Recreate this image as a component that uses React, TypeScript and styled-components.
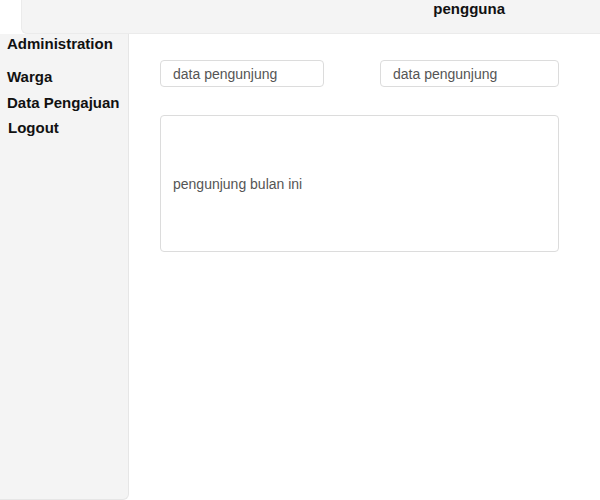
import React from "react";
import styled, { createGlobalStyle } from "styled-components";

const Global = createGlobalStyle`
  html, body { margin: 0; padding: 0; background: #ffffff; }
  body { font-family: "Liberation Sans", Arial, sans-serif; color: #111; }
  * { box-sizing: border-box; }
`;

const Page = styled.div`
  display: flex;
  flex-direction: column;
  width: 600px;
  height: 500px;
  overflow: hidden;
`;

const Header = styled.header`
  margin-left: 21px;
  height: 34px;
  background: #f4f4f4;
  border-left: 1px solid #ebebeb;
  border-bottom: 1px solid #ebebeb;
  border-bottom-left-radius: 6px;
  display: flex;
  justify-content: flex-end;
  align-items: flex-start;
  padding-right: 95px;
`;

const HeaderTitle = styled.span`
  font-size: 15px;
  font-weight: bold;
  line-height: 17px;
  color: #111;
`;

const Body = styled.div`
  flex: 1;
  display: flex;
  min-height: 0;
`;

const Sidebar = styled.nav`
  width: 129px;
  flex-shrink: 0;
  background: #f4f4f4;
  border-right: 1px solid #e6e6e6;
  border-bottom: 1px solid #e6e6e6;
  border-bottom-right-radius: 6px;
  padding: 1px 0 0 7px;
`;

const SideHeading = styled.div`
  font-size: 15px;
  font-weight: bold;
  line-height: 17px;
  margin-bottom: 12px;
`;

const SideList = styled.ul`
  list-style: none;
  margin: 0;
  padding: 0;
`;

const SideItem = styled.li<{ $indent?: number }>`
  font-size: 15px;
  font-weight: bold;
  line-height: 25.5px;
  padding-left: ${(p) => p.$indent ?? 0}px;
`;

const Main = styled.main`
  flex: 1;
  padding: 26px 0 0 31px;
  display: flex;
  flex-direction: column;
  gap: 28px;
`;

const StatRow = styled.div`
  display: flex;
  justify-content: space-between;
  width: 399px;
`;

const StatBox = styled.div<{ $width: number }>`
  width: ${(p) => p.$width}px;
  height: 27px;
  border: 1px solid #dcdcdc;
  border-radius: 4px;
  padding: 0 12px;
  display: flex;
  align-items: center;
  font-size: 14px;
  color: #555;
`;

const Card = styled.div`
  width: 399px;
  height: 137px;
  border: 1px solid #dcdcdc;
  border-radius: 4px;
  padding: 0 12px;
  display: flex;
  align-items: center;
  font-size: 14px;
  color: #555;
`;

export default function App() {
  return (
    <>
      <Global />
      <Page>
        <Header>
          <HeaderTitle>pengguna</HeaderTitle>
        </Header>
        <Body>
          <Sidebar>
            <SideHeading>Administration</SideHeading>
            <SideList>
              <SideItem>Warga</SideItem>
              <SideItem>Data Pengajuan</SideItem>
              <SideItem $indent={1}>Logout</SideItem>
            </SideList>
          </Sidebar>
          <Main>
            <StatRow>
              <StatBox $width={164}>data pengunjung</StatBox>
              <StatBox $width={179}>data pengunjung</StatBox>
            </StatRow>
            <Card>pengunjung bulan ini</Card>
          </Main>
        </Body>
      </Page>
    </>
  );
}
